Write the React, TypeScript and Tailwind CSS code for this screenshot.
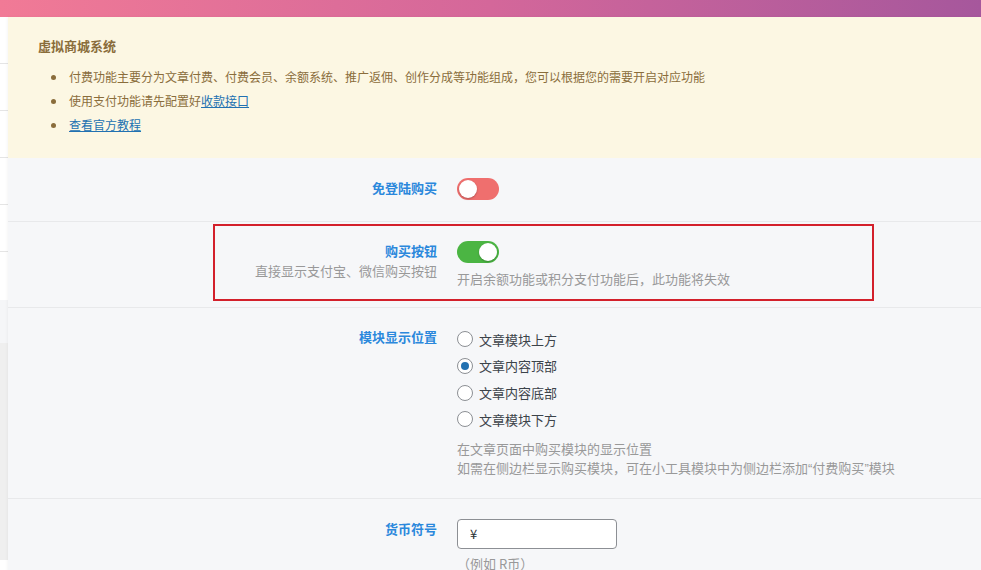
import React from "react";

const font = { fontFamily: '"Noto Sans CJK SC", "Noto Sans", sans-serif' };
const latin = { fontFamily: '"Liberation Sans", sans-serif' };

const Toggle: React.FC<{ on: boolean }> = ({ on }) => (
  <div
    className={`w-[42px] h-[22px] rounded-full p-[2px] flex ${
      on ? "bg-[#4bb543] justify-end" : "bg-[#ef6f6e] justify-start"
    }`}
  >
    <div className="w-[18px] h-[18px] rounded-full bg-white shadow-[0_1px_2px_rgba(0,0,0,0.25)]" />
  </div>
);

const Radio: React.FC<{ label: string; checked?: boolean }> = ({ label, checked }) => (
  <label className="flex items-center h-[26.67px] gap-[6px] text-[13px] text-[#3c434a]">
    <span className="w-[16px] h-[16px] rounded-full border border-[#8c8f94] bg-white flex items-center justify-center">
      {checked && <span className="w-[8px] h-[8px] rounded-full bg-[#2271b1]" />}
    </span>
    {label}
  </label>
);

const positions = [
  { label: "文章模块上方", checked: false },
  { label: "文章内容顶部", checked: true },
  { label: "文章内容底部", checked: false },
  { label: "文章模块下方", checked: false },
];

const Label: React.FC<{ text: string; sub?: string }> = ({ text, sub }) => (
  <div className="w-[429px] shrink-0 text-right">
    <div className="text-[13px] leading-[20px] font-bold text-[#2b88dc]">{text}</div>
    {sub && <div className="text-[13px] leading-[20px] text-[#999]">{sub}</div>}
  </div>
);

export default function App() {
  return (
    <div className="w-[981px] h-[570px] overflow-hidden bg-white" style={font}>
      <div className="h-[17px] bg-gradient-to-r from-[#f17a96] via-[#d4679a] to-[#a6579c]" />
      <div className="flex">
        {/* page behind the panel */}
        <div className="w-[8px] shrink-0 flex flex-col">
          <div className="h-[47px] border-b border-[#e5e5e5]" />
          <div className="h-[47px] border-b border-[#e5e5e5]" />
          <div className="h-[47px] border-b border-[#e5e5e5]" />
          <div className="h-[47px] border-b border-[#e5e5e5]" />
          <div className="h-[47px] border-b border-[#e5e5e5]" />
          <div className="h-[48px]" />
          <div className="h-[43px] bg-[#f5f6f8]" />
          <div className="h-[217px] bg-[#efefef]" />
          <div className="h-[20px]" />
        </div>

        <div className="flex-1 bg-[#f6f7f9] shadow-[-1px_0_3px_rgba(0,0,0,0.04)]">
          {/* notice */}
          <div className="bg-[#fcf7e3] h-[141px] pl-[30px] pt-[19px] text-[#8a6d3b]">
            <div className="text-[13px] leading-[20px] font-bold">虚拟商城系统</div>
            <ul className="mt-[9px] text-[12px]">
              <li className="flex items-center h-[24px]">
                <span className="w-[5px] h-[5px] rounded-full bg-[#8a6d3b] ml-[13px] mr-[13px]" />
                付费功能主要分为文章付费、付费会员、余额系统、推广返佣、创作分成等功能组成，您可以根据您的需要开启对应功能
              </li>
              <li className="flex items-center h-[24px]">
                <span className="w-[5px] h-[5px] rounded-full bg-[#8a6d3b] ml-[13px] mr-[13px]" />
                使用支付功能请先配置好
                <a className="text-[#2271b1] underline">收款接口</a>
              </li>
              <li className="flex items-center h-[24px]">
                <span className="w-[5px] h-[5px] rounded-full bg-[#8a6d3b] ml-[13px] mr-[13px]" />
                <a className="text-[#2271b1] underline">查看官方教程</a>
              </li>
            </ul>
          </div>

          {/* 免登陆购买 */}
          <div className="flex pt-[20px] pb-[21px] border-b border-[#e8e9eb]">
            <Label text="免登陆购买" />
            <div className="ml-[20px]">
              <Toggle on={false} />
            </div>
          </div>

          {/* 购买按钮 */}
          <div className="relative flex pt-[19px] pb-[18px] border-b border-[#e8e9eb]">
            <Label text="购买按钮" sub="直接显示支付宝、微信购买按钮" />
            <div className="ml-[20px]">
              <Toggle on={true} />
              <div className="mt-[6px] text-[13px] leading-[20px] text-[#999]">
                开启余额功能或积分支付功能后，此功能将失效
              </div>
            </div>
            <div className="absolute left-[205px] top-[2px] w-[661px] h-[77px] border-2 border-[#d3202b] pointer-events-none" />
          </div>

          {/* 模块显示位置 */}
          <div className="flex pt-[19px] pb-[20px] border-b border-[#e8e9eb]">
            <Label text="模块显示位置" />
            <div className="ml-[20px] -mt-[1px]">
              <div className="flex flex-col">
                {positions.map((p) => (
                  <Radio key={p.label} label={p.label} checked={p.checked} />
                ))}
              </div>
              <div className="mt-[6px] text-[13px] leading-[19px] text-[#999]">
                <div>在文章页面中购买模块的显示位置</div>
                <div>
                  如需在侧边栏显示购买模块，可在小工具模块中为侧边栏添加<span style={latin}>“</span>付费购买<span style={latin}>”</span>模块
                </div>
              </div>
            </div>
          </div>

          {/* 货币符号 */}
          <div className="flex pt-[20px]">
            <Label text="货币符号" />
            <div className="ml-[20px]">
              <div className="w-[160px] h-[30px] rounded-[4px] border border-[#8c8f94] bg-white flex items-center pl-[12px] text-[13px] text-[#2c3338]">
                ¥
              </div>
              <div className="mt-[5px] text-[13px] leading-[20px] text-[#999]">（例如 R币）</div>
            </div>
          </div>
        </div>
      </div>
    </div>
  );
}
